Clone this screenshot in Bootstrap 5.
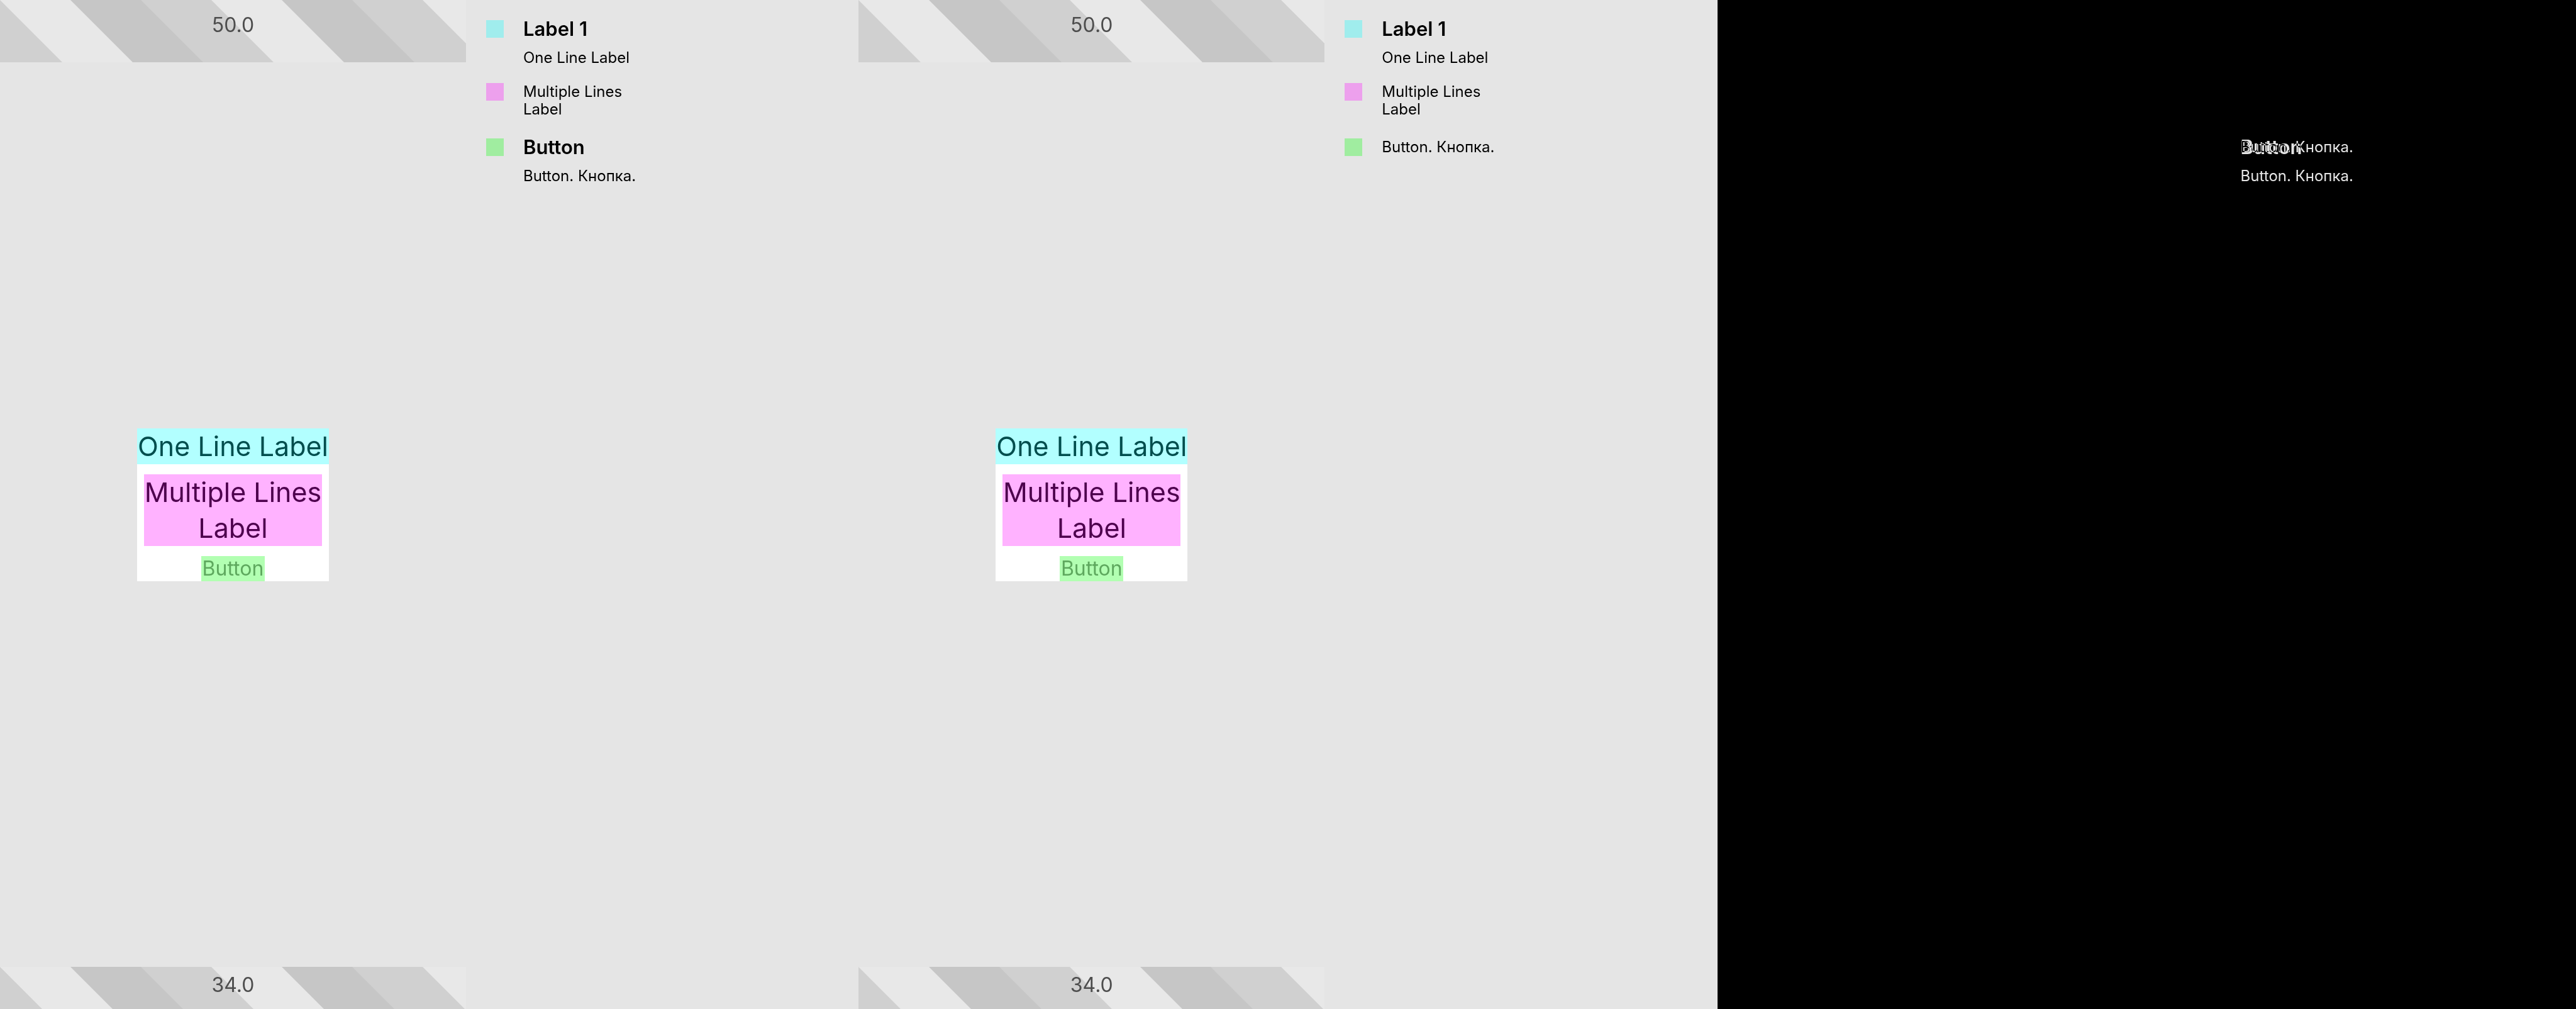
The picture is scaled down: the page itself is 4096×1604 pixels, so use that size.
<!DOCTYPE html>
<html lang="en">
<head>
<meta charset="utf-8">
<meta name="viewport" content="width=device-width, initial-scale=1">
<title>Accessibility snapshot diff</title>
<link href="https://cdn.jsdelivr.net/npm/bootstrap@5.3.0/dist/css/bootstrap.min.css" rel="stylesheet">
<style>
  body { font-family: Inter, sans-serif; background: #e5e5e5; color: #000; }
  .phone { flex: 0 0 54.27%; }
  .phone, .overlap { display: grid; }
  .phone > *, .overlap > * { grid-area: 1 / 1; }
  .inset-bar { display: grid; color: #4d4d4d; font-size: 32px; line-height: 40px; }
  .inset-bar > * { grid-area: 1 / 1; }
  .inset-top { height: 99px; }
  .inset-bottom { height: 67px; }
  .inset-value { z-index: 1; padding-top: 20px; }
  .inset-bottom .inset-value { padding-top: 9px; }
  .tag { font-size: 43px; line-height: 57px; text-align: center; }
  .stack { gap: 16px; width: 305px; }
  .tag-cyan { background: #b2ffff; color: #004d4d; width: 100%; }
  .tag-pink { background: #ffb2ff; color: #4d004d; width: 283px; }
  .tag-green { background: #b2ffb2; color: #5ea85e; border: 0; border-radius: 0; padding: 0; width: 101px; font-size: 32px; line-height: 40px; }
  .legend { padding: 32px; gap: 26px; }
  .entry { gap: 31px; }
  .swatch { width: 28px; height: 28px; flex: none; }
  .sw-cyan { background: #a0eded; }
  .sw-pink { background: #eda0ed; }
  .sw-green { background: #a0eda0; }
  .name { font-size: 31px; line-height: 28px; font-weight: 600; margin: 0 0 18px; }
  .detail { font-size: 24px; line-height: 28px; margin: 0; }
  .two-line { margin-bottom: 6px; }
  .diff { background: #000; color: #e5e5e5; }
  .diff .legend { margin-left: 54.27%; padding-top: 220px; }
  .diff .entry { padding-left: 59px; }
  .blend { mix-blend-mode: difference; }
</style>
<script src="https://cdn.jsdelivr.net/npm/bootstrap@5.3.0/dist/js/bootstrap.bundle.min.js"></script>
</head>
<body>
<svg width="0" height="0" class="position-absolute" aria-hidden="true">
  <defs>
    <pattern id="stripes" width="336" height="200" patternUnits="userSpaceOnUse" patternTransform="skewX(45)">
      <rect width="112" height="200" fill="#e8e8e8"/>
      <rect x="112" width="112" height="200" fill="#c6c6c6"/>
      <rect x="224" width="112" height="200" fill="#d0d0d0"/>
    </pattern>
  </defs>
</svg>
<main class="row g-0 min-vh-100">
  <section class="col-4 d-flex">
    <div class="phone">
      <div class="inset-bar inset-top align-self-start">
        <svg width="100%" height="100%" aria-hidden="true"><rect width="100%" height="100%" fill="url(#stripes)"/></svg>
        <div class="inset-value text-center">50.0</div>
      </div>
      <div class="stack bg-white d-flex flex-column align-items-center align-self-center mx-auto">
        <div class="tag tag-cyan text-nowrap">One Line Label</div>
        <div class="tag tag-pink text-nowrap">Multiple Lines<br>Label</div>
        <button type="button" class="tag-green">Button</button>
      </div>
      <div class="inset-bar inset-bottom align-self-end">
        <svg width="100%" height="100%" aria-hidden="true"><rect width="100%" height="100%" fill="url(#stripes)"/></svg>
        <div class="inset-value text-center">34.0</div>
      </div>
    </div>
    <div class="legend d-flex flex-column flex-grow-1">
      <div class="entry d-flex"><span class="swatch sw-cyan"></span><div><h2 class="name">Label 1</h2><p class="detail">One Line Label</p></div></div>
      <div class="entry two-line d-flex"><span class="swatch sw-pink"></span><p class="detail">Multiple Lines<br>Label</p></div>
      <div class="entry d-flex"><span class="swatch sw-green"></span><div><h2 class="name">Button</h2><p class="detail">Button. Кнопка.</p></div></div>
    </div>
  </section>
  <section class="col-4 d-flex">
    <div class="phone">
      <div class="inset-bar inset-top align-self-start">
        <svg width="100%" height="100%" aria-hidden="true"><rect width="100%" height="100%" fill="url(#stripes)"/></svg>
        <div class="inset-value text-center">50.0</div>
      </div>
      <div class="stack bg-white d-flex flex-column align-items-center align-self-center mx-auto">
        <div class="tag tag-cyan text-nowrap">One Line Label</div>
        <div class="tag tag-pink text-nowrap">Multiple Lines<br>Label</div>
        <button type="button" class="tag-green">Button</button>
      </div>
      <div class="inset-bar inset-bottom align-self-end">
        <svg width="100%" height="100%" aria-hidden="true"><rect width="100%" height="100%" fill="url(#stripes)"/></svg>
        <div class="inset-value text-center">34.0</div>
      </div>
    </div>
    <div class="legend d-flex flex-column flex-grow-1">
      <div class="entry d-flex"><span class="swatch sw-cyan"></span><div><h2 class="name">Label 1</h2><p class="detail">One Line Label</p></div></div>
      <div class="entry two-line d-flex"><span class="swatch sw-pink"></span><p class="detail">Multiple Lines<br>Label</p></div>
      <div class="entry d-flex"><span class="swatch sw-green"></span><p class="detail">Button. Кнопка.</p></div>
    </div>
  </section>
  <section class="col-4 diff">
    <div class="legend">
      <div class="entry">
        <div class="overlap">
          <h2 class="name">Button</h2>
          <p class="detail blend">Button. Кнопка.</p>
        </div>
        <p class="detail">Button. Кнопка.</p>
      </div>
    </div>
  </section>
</main>
</body>
</html>
